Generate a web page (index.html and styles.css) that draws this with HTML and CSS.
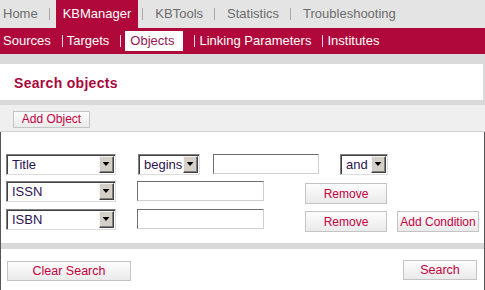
FILE: index.html
```html
<!DOCTYPE html>
<html lang="en">
<head>
<meta charset="utf-8">
<title>KBManager - Search objects</title>
<link rel="stylesheet" href="styles.css">
</head>
<body>
<nav class="topnav">
  <a class="tab first">Home</a><span class="sep"></span>
  <a class="tab active">KBManager</a><span class="sep"></span>
  <a class="tab">KBTools</a><span class="sep"></span>
  <a class="tab">Statistics</a><span class="sep"></span>
  <a class="tab">Troubleshooting</a>
</nav>
<nav class="subnav">
  <a class="subtab first">Sources</a><span class="subsep"></span>
  <a class="subtab">Targets</a><span class="subsep"></span>
  <a class="subtab active">Objects</a><span class="subsep"></span>
  <a class="subtab">Linking Parameters</a><span class="subsep"></span>
  <a class="subtab">Institutes</a>
</nav>
<main class="page">
  <header class="page-head"><h1 class="title">Search objects</h1></header>
  <div class="band"></div>
  <div class="toolbar"><button class="btn btn-add">Add Object</button></div>
  <section class="search-body">
    <form class="search-form">
      <div class="row">
        <div class="select field-select"><span class="select-value">Title</span><span class="select-btn"></span></div>
        <div class="select op-select"><span class="select-value">begins</span><span class="select-btn"></span></div>
        <input class="text-input short-input" type="text">
        <div class="select and-select"><span class="select-value">and</span><span class="select-btn"></span></div>
      </div>
      <div class="row">
        <div class="select field-select"><span class="select-value">ISSN</span><span class="select-btn"></span></div>
        <input class="text-input long-input" type="text">
        <button class="btn btn-remove" type="button">Remove</button>
      </div>
      <div class="row">
        <div class="select field-select"><span class="select-value">ISBN</span><span class="select-btn"></span></div>
        <input class="text-input long-input" type="text">
        <button class="btn btn-remove" type="button">Remove</button>
        <button class="btn btn-cond" type="button">Add Condition</button>
      </div>
    </form>
    <div class="band band-low"></div>
    <div class="footer">
      <button class="btn btn-clear" type="button">Clear Search</button>
      <button class="btn btn-search" type="button">Search</button>
    </div>
  </section>
</main>
</body>
</html>
```

FILE: styles.css
```css
* { box-sizing: border-box; }
html, body { margin: 0; padding: 0; }
body {
  width: 485px;
  background: #dadada;
  font-family: "Liberation Sans", Arial, sans-serif;
  font-size: 13px;
}

/* top navigation */
.topnav {
  display: flex;
  align-items: center;
  height: 28px;
  background: #e4e4e4;
}
.tab {
  display: block;
  padding: 0 8px;
  line-height: 28px;
  color: #6c6c6c;
  white-space: nowrap;
}
.tab.first { padding-left: 3px; }
.tab.active {
  background: #b0083a;
  color: #fff;
  padding: 0 7px;
  margin: 0 1px 0 2px;
}
.sep {
  width: 1px;
  height: 12px;
  background: #a9a9a9;
  margin: 0 4px 0 3px;
}

/* sub navigation */
.subnav {
  display: flex;
  align-items: center;
  height: 26px;
  background: #b0083a;
}
.subtab {
  display: block;
  padding: 0 11px 0 4px;
  line-height: 26px;
  color: #fff;
  white-space: nowrap;
}
.subtab.first { padding-left: 3px; }
.subtab.active {
  background: #fff;
  color: #95164e;
  line-height: 20px;
  padding: 0 9px 0 5px;
  margin: 0 11px 0 4px;
}
.subsep {
  width: 1px;
  height: 12px;
  background: #f4d6df;
}

/* page */
.page { padding-top: 10px; }
.page-head {
  background: #fff;
  height: 36px;
  margin-right: 2px;
  padding: 2px 0 0 14px;
}
.title {
  margin: 0;
  font-size: 14px;
  line-height: 34px;
  font-weight: bold;
  letter-spacing: 0.3px;
  color: #a8083c;
}
.band { height: 5px; background: #d9d9d9; }
.band-low { height: 6px; }
.toolbar {
  height: 27px;
  background: #efefef;
  border-bottom: 1px solid #d2d2d2;
  padding: 6px 0 0 13px;
}

/* buttons */
.btn {
  display: block;
  height: 21px;
  padding: 0;
  font-family: "Liberation Sans", Arial, sans-serif;
  font-size: 12px;
  color: #c2003e;
  background: linear-gradient(#fdfdfd, #eaeaea);
  border: 1px solid #c4c4c4;
  border-radius: 0;
  text-align: center;
}
.btn-add { width: 77px; height: 17px; line-height: 15px; }
.btn-remove { width: 82px; margin-left: 41px; margin-top: 2px; }
.btn-cond { width: 82px; margin-left: 10px; margin-top: 2px; }
.btn-clear { width: 124px; height: 20px; font-size: 12.5px; }
.btn-search { width: 74px; height: 20px; margin-top: -1px; font-size: 12.5px; }

/* search body */
.search-body {
  background: #fff;
  border: 1px solid #555;
  border-top: none;
}
.search-form {
  margin: 0;
  padding: 22px 0 13px 5px;
  display: flex;
  flex-direction: column;
  gap: 6px;
}
.row {
  display: flex;
  align-items: flex-start;
  height: 21px;
}
.row + .row + .row { margin-top: 1px; }

/* fake selects */
.select {
  display: flex;
  align-items: center;
  height: 21px;
  padding: 1px 1px 1px 3px;
  background: #fff;
  border: 1px solid;
  border-color: #808080 #dcdcdc #dcdcdc #808080;
  box-shadow: inset 1px 1px 0 #404040;
}
.select-value {
  flex: 1;
  padding-left: 2px;
  font-size: 13px;
  line-height: 17px;
  color: #2e1250;
  white-space: nowrap;
  overflow: hidden;
}
.select-btn {
  display: flex;
  align-items: center;
  justify-content: center;
  flex: none;
  width: 15px;
  height: 17px;
  background: #d4d0c8;
  border: 1px solid;
  border-color: #f4f4f4 #404040 #404040 #f4f4f4;
  box-shadow: inset -1px -1px 0 #808080;
}
.select-btn::after {
  content: "";
  width: 7px;
  height: 4px;
  margin: 0 1px 1px 0;
  background: #000;
  clip-path: polygon(0 0, 100% 0, 50% 100%);
}
.field-select { width: 110px; }
.op-select { width: 62px; margin-left: 22px; }
.and-select { width: 48px; margin-left: 21px; }

/* text inputs */
.text-input {
  display: block;
  height: 20px;
  margin: 0;
  padding: 0 3px;
  background: #fff;
  border: 1px solid;
  border-color: #6f6f6f #cfcfcf #cfcfcf #6f6f6f;
  font-family: "Liberation Sans", Arial, sans-serif;
  font-size: 13px;
}
.short-input { width: 106px; margin-left: 13px; }
.long-input { width: 127px; margin-left: 21px; }

/* footer */
.footer {
  display: flex;
  justify-content: space-between;
  align-items: flex-start;
  height: 46px;
  padding: 12px 7px 0 6px;
}
```
